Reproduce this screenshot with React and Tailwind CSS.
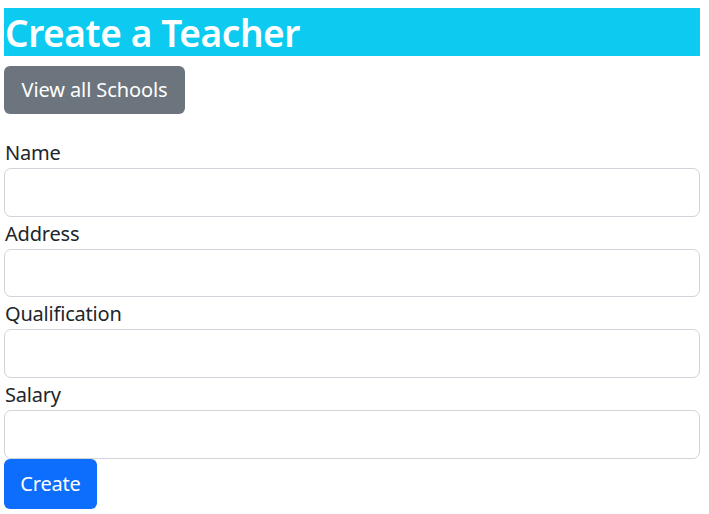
import React from 'react';

const fields = ['Name', 'Address', 'Qualification', 'Salary'];

const App = () => {
    return (
        <div className="pt-[8px] pl-[4px] bg-white min-h-screen text-[#212529]" style={{ fontFamily: '"Noto Sans", "Open Sans", sans-serif' }}>
            <div className="w-[696px]">
                <h1 className="h-[48px] bg-[#0dcaf0] text-white font-semibold text-[37px] leading-[50px] pl-[1px] tracking-[-0.4px]">
                    Create a Teacher
                </h1>
                <button className="mt-[10px] h-[48px] w-[181px] bg-[#6c757d] text-white text-[20px] rounded-[6px] tracking-[-0.1px]">
                    View all Schools
                </button>

                <form className="mt-[22px] flex flex-col" onSubmit={(e) => e.preventDefault()}>
                    {fields.map((field) => (
                        <div key={field} className="flex flex-col">
                            <label className="h-[32px] text-[20px] leading-[33px] pl-[1px] tracking-[-0.2px]">{field}</label>
                            <input
                                type="text"
                                className="h-[48.7px] w-full border border-[#ced4da] rounded-[7px] px-[16px] text-[20px] outline-none"
                            />
                        </div>
                    ))}
                    <div>
                        <button className="h-[50px] w-[93px] bg-[#0d6efd] text-white text-[20px] rounded-[6px] tracking-[-0.2px]">
                            Create
                        </button>
                    </div>
                </form>
            </div>
        </div>
    );
};

export default App;
